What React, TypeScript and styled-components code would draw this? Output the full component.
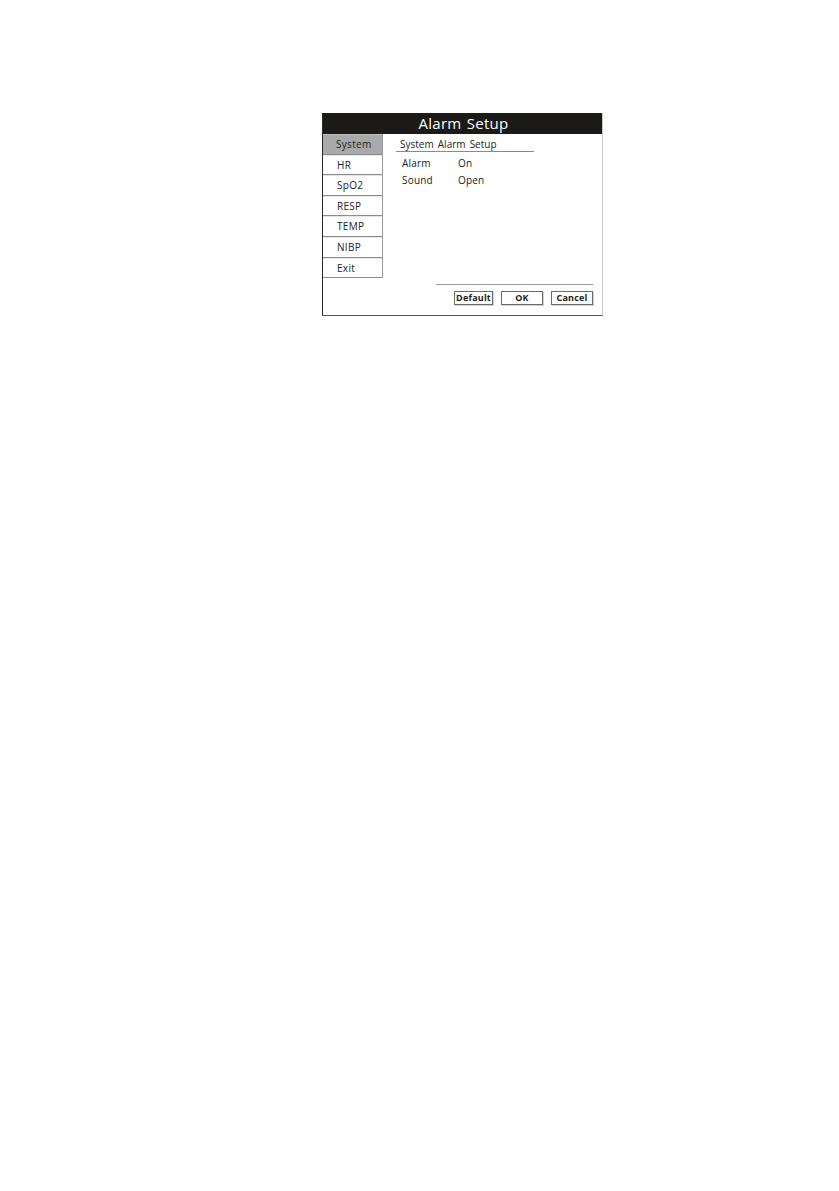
import styled, { createGlobalStyle } from "styled-components";

const GlobalStyle = createGlobalStyle`
  html, body {
    margin: 0;
    padding: 0;
    background: #ffffff;
  }
  body {
    font-family: "Open Sans", "Noto Sans", sans-serif;
    color: #222;
  }
`;

const Page = styled.div`
  width: 839px;
  height: 1191px;
  padding: 113px 0 0 322px;
  box-sizing: border-box;
`;

const Dialog = styled.div`
  width: 281px;
  height: 203px;
  display: flex;
  flex-direction: column;
  box-sizing: border-box;
  border-left: 1px solid #2a2a2a;
  border-right: 1px solid #c8c8c8;
  border-bottom: 1px solid #555;
  background: #fff;
`;

const TitleBar = styled.div`
  height: 21px;
  flex: 0 0 21px;
  background: #1b1a18;
  color: #fff;
  font-size: 15px;
  line-height: 21px;
  text-align: center;
  letter-spacing: 0.3px;
  word-spacing: 1px;
  padding-left: 2px;
`;

const Body = styled.div`
  flex: 1;
  display: flex;
  min-height: 0;
`;

const Sidebar = styled.ul`
  list-style: none;
  margin: 0;
  padding: 0;
  width: 59px;
  align-self: flex-start;
  border-right: 1px solid #9a9a9a;
`;

const SideItem = styled.li<{ active?: boolean }>`
  height: 20.6px;
  box-sizing: border-box;
  border-bottom: 1px solid #8c8c8c;
  border-top: 1px solid ${({ active }) => (active ? "#bdbdbd" : "#e6e6e6")};
  background: ${({ active }) => (active ? "#a9a9a9" : "#fff")};
  font-size: 10px;
  line-height: 18px;
  letter-spacing: 0.3px;
  padding-left: ${({ active }) => (active ? "13px" : "14px")};
  color: #222;
`;

const Content = styled.div`
  flex: 1;
  display: flex;
  flex-direction: column;
  padding: 4px 9px 10px 13px;
`;

const Heading = styled.div`
  width: 138px;
  box-sizing: border-box;
  padding-left: 4px;
  font-size: 10px;
  line-height: 13px;
  word-spacing: 1.5px;
  border-bottom: 1px solid #8a8a8a;
  margin-bottom: 3px;
`;

const Row = styled.div`
  display: flex;
  padding-left: 6px;
  font-size: 10px;
  line-height: 17px;
  letter-spacing: 0.2px;
`;

const Label = styled.span`
  width: 56px;
`;

const Footer = styled.div`
  margin-top: auto;
  margin-left: 40px;
  border-top: 1px solid #9a9a9a;
  padding-top: 6px;
  display: flex;
  justify-content: flex-end;
  gap: 8px;
`;

const Button = styled.button<{ w: number }>`
  width: ${({ w }) => w}px;
  height: 14px;
  padding: 0;
  box-sizing: border-box;
  border: 1px solid #6a6a6a;
  box-shadow: 1px 1px 0 #d0d0d0;
  background: #fff;
  font-family: "Open Sans", "Noto Sans", sans-serif;
  font-weight: 700;
  font-size: 9px;
  line-height: 12px;
  color: #222;
  letter-spacing: 0.2px;
`;

const menu = ["System", "HR", "SpO2", "RESP", "TEMP", "NIBP", "Exit"];

export default function App() {
  return (
    <Page>
      <GlobalStyle />
      <Dialog>
        <TitleBar>Alarm Setup</TitleBar>
        <Body>
          <Sidebar>
            {menu.map((m, i) => (
              <SideItem key={m} active={i === 0}>
                {m}
              </SideItem>
            ))}
          </Sidebar>
          <Content>
            <Heading>System Alarm Setup</Heading>
            <Row>
              <Label>Alarm</Label>
              <span>On</span>
            </Row>
            <Row>
              <Label>Sound</Label>
              <span>Open</span>
            </Row>
            <Footer>
              <Button w={39}>Default</Button>
              <Button w={42}>OK</Button>
              <Button w={42}>Cancel</Button>
            </Footer>
          </Content>
        </Body>
      </Dialog>
    </Page>
  );
}
